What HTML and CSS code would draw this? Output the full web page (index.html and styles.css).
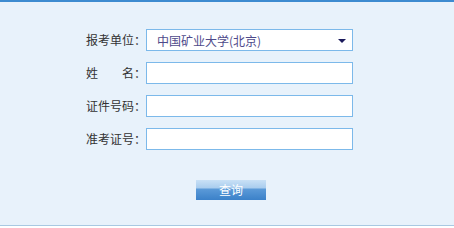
FILE: index.html
```html
<!DOCTYPE html>
<html lang="zh-CN">
<head>
    <meta charset="UTF-8">
    <title>成绩查询</title>
    <link rel="stylesheet" href="styles.css">
</head>
<body>
    <div class="panel">
        <form class="query-form">
            <div class="row">
                <span class="label">报考单位：</span>
                <div class="select-box">
                    <span class="select-text">中国矿业大学(北京)</span>
                    <span class="arrow"></span>
                </div>
            </div>
            <div class="row">
                <span class="label"><span class="wide">姓</span>名：</span>
                <input class="field" type="text">
            </div>
            <div class="row">
                <span class="label">证件号码：</span>
                <input class="field" type="text">
            </div>
            <div class="row">
                <span class="label">准考证号：</span>
                <input class="field" type="text">
            </div>
            <div class="actions">
                <button type="button" class="btn-query">查询</button>
            </div>
        </form>
    </div>
</body>
</html>
```

FILE: styles.css
```css
* {
    box-sizing: border-box;
}
body {
    margin: 0;
    background: #fff;
    font-family: "Noto Sans CJK SC", "DejaVu Sans", sans-serif;
    font-size: 12px;
}
.panel {
    height: 226px;
    background: #e8f2fb;
    border-top: 2px solid #3d8bd0;
    border-bottom: 1px solid #a9c9e2;
}
.query-form {
    padding: 27px 0 0 86px;
}
.row {
    display: flex;
    align-items: center;
    height: 22px;
    margin-bottom: 11px;
}
.label {
    width: 60px;
    color: #333;
    line-height: 22px;
    white-space: nowrap;
}
.label .wide {
    display: inline-block;
    width: 36px;
}
.select-box {
    width: 207px;
    height: 22px;
    background: #fff;
    border: 1px solid #7cb9ea;
    display: flex;
    align-items: center;
    justify-content: space-between;
    padding: 0 6px 0 10px;
}
.select-text {
    color: #4e4a8a;
}
.arrow {
    width: 0;
    height: 0;
    border-left: 4px solid transparent;
    border-right: 4px solid transparent;
    border-top: 4px solid #1b1a5c;
    margin-top: 1px;
}
.field {
    width: 207px;
    height: 22px;
    margin: 0;
    background: #fff;
    border: 1px solid #7cb9ea;
    outline: none;
    padding: 0 4px;
}
.actions {
    padding: 19px 0 0 110px;
}
.btn-query {
    display: block;
    width: 70px;
    height: 20px;
    border: none;
    padding: 0;
    color: #fff;
    font-family: "Noto Sans CJK SC", sans-serif;
    font-size: 12px;
    line-height: 18px;
    background: linear-gradient(#c9e1f6, #a9cdee 40%, #5b9ad8 45%, #3b81c9);
    cursor: pointer;
}
```
